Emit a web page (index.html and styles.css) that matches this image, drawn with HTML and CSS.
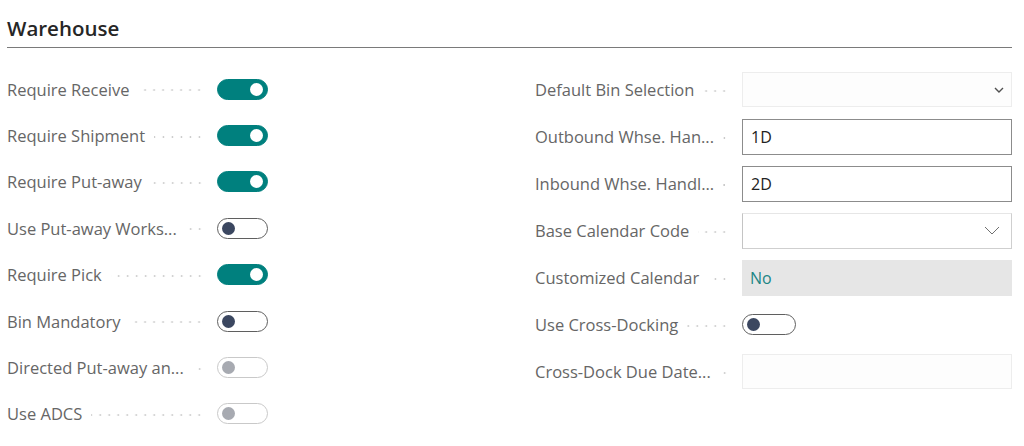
FILE: index.html
```html
<!DOCTYPE html>
<html lang="en">
<head>
    <meta charset="UTF-8">
    <meta name="viewport" content="width=device-width, initial-scale=1.0">
    <title>Warehouse</title>
    <link rel="stylesheet" href="styles.css">
</head>
<body>
    <div class="page">
        <h2 class="title">Warehouse</h2>

        <div class="columns">
            <div class="col col-left">
                <div class="row">
                    <div class="label"><span class="text">Require Receive</span><span class="leader"></span></div>
                    <span class="toggle on"></span>
                </div>
                <div class="row">
                    <div class="label"><span class="text">Require Shipment</span><span class="leader"></span></div>
                    <span class="toggle on"></span>
                </div>
                <div class="row">
                    <div class="label"><span class="text">Require Put-away</span><span class="leader"></span></div>
                    <span class="toggle on"></span>
                </div>
                <div class="row">
                    <div class="label"><span class="text">Use Put-away Works...</span><span class="leader"></span></div>
                    <span class="toggle off"></span>
                </div>
                <div class="row">
                    <div class="label"><span class="text">Require Pick</span><span class="leader"></span></div>
                    <span class="toggle on"></span>
                </div>
                <div class="row">
                    <div class="label"><span class="text">Bin Mandatory</span><span class="leader"></span></div>
                    <span class="toggle off"></span>
                </div>
                <div class="row">
                    <div class="label"><span class="text">Directed Put-away an...</span><span class="leader"></span></div>
                    <span class="toggle disabled"></span>
                </div>
                <div class="row">
                    <div class="label"><span class="text">Use ADCS</span><span class="leader"></span></div>
                    <span class="toggle disabled"></span>
                </div>
            </div>

            <div class="col col-right">
                <div class="row">
                    <div class="label"><span class="text">Default Bin Selection</span><span class="leader"></span></div>
                    <div class="field faint">
                        <svg class="chev-small" width="10" height="6" viewBox="0 0 10 6"><path d="M1 1 L5 5 L9 1" fill="none" stroke="#505050" stroke-width="1.4"/></svg>
                    </div>
                </div>
                <div class="row">
                    <div class="label"><span class="text">Outbound Whse. Han...</span><span class="leader"></span></div>
                    <div class="field edit">1D</div>
                </div>
                <div class="row">
                    <div class="label"><span class="text">Inbound Whse. Handl...</span><span class="leader"></span></div>
                    <div class="field edit">2D</div>
                </div>
                <div class="row">
                    <div class="label"><span class="text">Base Calendar Code</span><span class="leader"></span></div>
                    <div class="field lookup">
                        <svg class="chev-big" width="16" height="9" viewBox="0 0 16 9"><path d="M1 1 L8 8 L15 1" fill="none" stroke="#707070" stroke-width="1"/></svg>
                    </div>
                </div>
                <div class="row">
                    <div class="label"><span class="text">Customized Calendar</span><span class="leader"></span></div>
                    <div class="field readonly">No</div>
                </div>
                <div class="row">
                    <div class="label"><span class="text">Use Cross-Docking</span><span class="leader"></span></div>
                    <span class="toggle off wide"></span>
                </div>
                <div class="row">
                    <div class="label"><span class="text">Cross-Dock Due Date...</span><span class="leader"></span></div>
                    <div class="field faint"></div>
                </div>
            </div>
        </div>
    </div>
</body>
</html>
```

FILE: styles.css
```css
body {
    margin: 0;
    background: #ffffff;
    font-family: "Open Sans", "Noto Sans", sans-serif;
    color: #666666;
}

.page {
    padding: 0 12px 0 7px;
}

.title {
    margin: 0;
    box-sizing: border-box;
    height: 48px;
    padding-top: 14px;
    font-size: 20.5px;
    line-height: 28px;
    font-weight: 600;
    color: #262626;
    border-bottom: 1px solid #7a7a7a;
}

.columns {
    display: grid;
    grid-template-columns: 528px 1fr;
    padding-top: 18px;
}

.row {
    display: flex;
    align-items: center;
}

.col-left .row {
    height: 46.4px;
}

.col-right .row {
    height: 47px;
}

.label {
    display: flex;
    align-items: center;
    min-width: 0;
    font-size: 16.5px;
}

.col-left .label {
    width: 210px;
}

.col-right .label {
    width: 207px;
}

.text {
    white-space: nowrap;
    flex: none;
}

.leader {
    flex: 1;
    height: 6px;
    margin: 2px 13px 0 9px;
    background-image: radial-gradient(circle, #cacaca 0.8px, transparent 1.2px);
    background-size: 9px 6px;
    background-repeat: repeat-x;
    background-position: right center;
}

/* toggles */
.toggle {
    position: relative;
    box-sizing: border-box;
    width: 51px;
    height: 21px;
    border-radius: 11px;
    border: 1px solid #5f5f5f;
    background: #ffffff;
    flex: none;
}

.toggle.wide {
    width: 54px;
}

.toggle::after {
    content: "";
    position: absolute;
    top: 3px;
    left: 4px;
    width: 13px;
    height: 13px;
    border-radius: 50%;
    background: #3b4760;
}

.toggle.on {
    background: #00807e;
    border-color: #00807e;
}

.toggle.on::after {
    left: auto;
    right: 4px;
    background: #ffffff;
}

.toggle.disabled {
    border-color: #c9c9c9;
}

.toggle.disabled::after {
    background: #a7aab1;
}

/* fields */
.field {
    box-sizing: border-box;
    width: 270px;
    height: 35px;
    display: flex;
    align-items: center;
    padding-left: 8px;
    font-size: 16px;
    color: #222222;
}

.field.faint {
    border: 1px solid #ededed;
    background: #fdfdfd;
    justify-content: flex-end;
    padding-right: 7px;
}

.field.edit {
    height: 36px;
    border: 1px solid #8c8c8c;
}

.field.lookup {
    height: 36px;
    border: 1px solid #cfcfcf;
    border-top-color: #e6e6e6;
    border-left-color: #c4c4c4;
    justify-content: flex-end;
    padding-right: 11px;
}

.field.readonly {
    height: 36px;
    background: #e6e6e6;
    color: #1c8585;
}
```
